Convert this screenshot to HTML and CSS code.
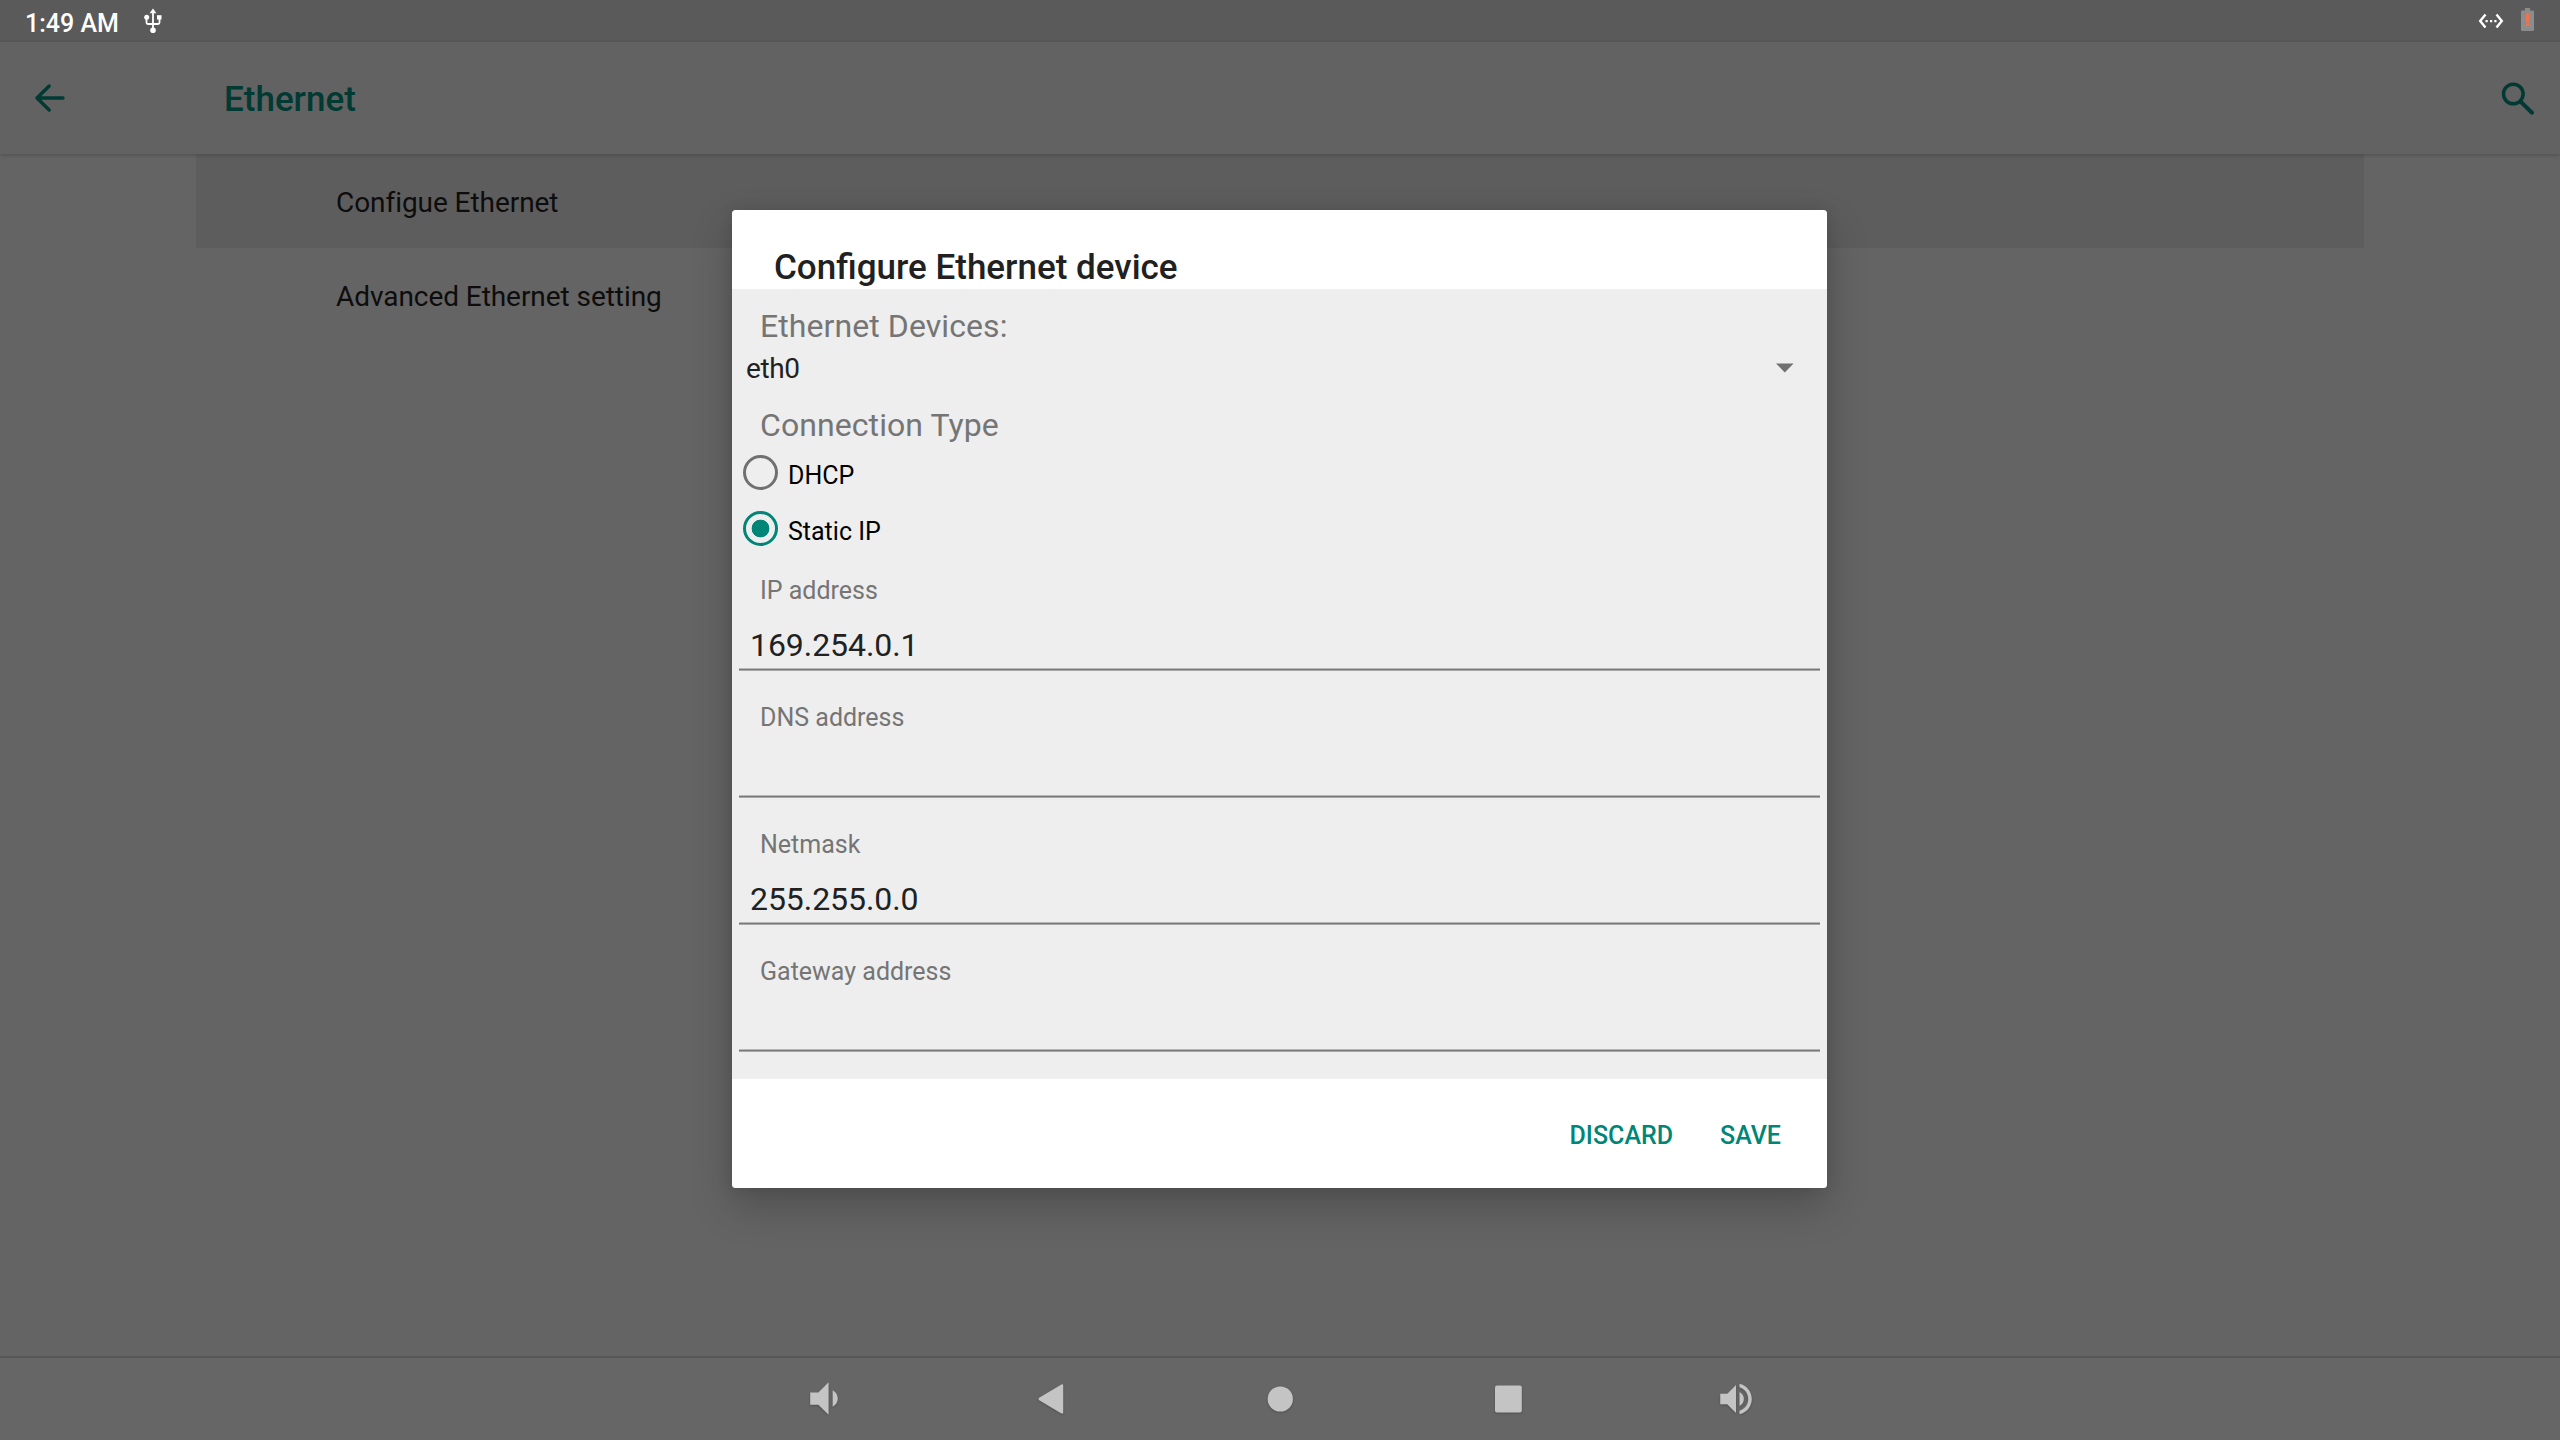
FILE: index.html
```html
<!DOCTYPE html>
<html lang="en">
<head>
<meta charset="utf-8">
<title>Ethernet</title>
<link rel="stylesheet" href="styles.css">
</head>
<body>
<div class="screen">
  <header class="status">
    <span class="clock">1:49 AM</span>
    <svg class="usb" width="18" height="26" viewBox="0 0 18 26"><path d="M9 3v20M2.500 9v5.500q0 1.500 1.500 1.500h10q1.500 0 1.500-1.500V9" fill="none" stroke="#fff" stroke-width="1.800"/><path d="M9 .5l3.400 4.700H5.600z" fill="#fff"/><circle cx="9" cy="22.300" r="2.800" fill="#fff"/><circle cx="2.700" cy="9.300" r="2.500" fill="#fff"/><path d="M13 7.200h4.500v4.300H13z" fill="#fff"/></svg>
    <span class="spacer"></span>
    <svg class="lan" width="26" height="16" viewBox="0 0 26 16"><path d="M7.500 1.500L2.200 8l5.300 6.500M18.500 1.500L23.800 8l-5.300 6.500" fill="none" stroke="#fff" stroke-width="2.400"/><path d="M7.500 7h2.200v2.200H7.500zM12 7h2.200v2.200H12zM16.300 7h2.200v2.200h-2.200z" fill="#fff"/></svg>
    <svg class="battery" width="13" height="23" viewBox="0 0 13 23"><path d="M4 0h5v2.500h2.700q1.300 0 1.300 1.300v17.900q0 1.300-1.300 1.300H1.300Q0 23 0 21.700V3.800q0-1.300 1.300-1.300H4z" fill="#8c8c8c"/><path d="M5 5.500h3.200v9H5zM5 15.500h3.200v2.600H5z" fill="#f4724a"/></svg>
  </header>
  <div class="toolbar">
    <svg class="back" width="32" height="30" viewBox="0 0 32 30"><path d="M29 15H3M15.200 3L3 15l12.200 12" fill="none" stroke="#003a33" stroke-width="3.400" stroke-linecap="round" stroke-linejoin="round"/></svg>
    <h1>Ethernet</h1>
    <svg class="search" width="34" height="34" viewBox="0 0 34 34"><circle cx="12.300" cy="13" r="9.800" fill="none" stroke="#003a33" stroke-width="3.500"/><path d="M20.500 21.500L31 31.700" stroke="#003a33" stroke-width="4" stroke-linecap="round"/></svg>
  </div>
  <main class="list">
    <div class="row selected">Configue Ethernet</div>
    <div class="row">Advanced Ethernet setting</div>
  </main>
  <nav class="nav">
    <span class="key"><svg width="49" height="49" viewBox="0 0 24 24"><path d="M18.500 12c0-1.770-1.020-3.290-2.500-4.030v8.050c1.480-.73 2.500-2.250 2.500-4.020zM5 9v6h4l5 5V4L9 9H5z"/></svg></span>
    <span class="key"><svg width="32" height="34" viewBox="0 0 32 34"><path d="M3.200 15.800Q2 17 3.200 18.200L25 31.300q2.200 1 2.200-1V3.700q0-2-2.200-1z"/></svg></span>
    <span class="key"><svg width="30" height="30" viewBox="0 0 30 30"><ellipse cx="15.300" cy="15" rx="12.600" ry="12.600"/></svg></span>
    <span class="key"><svg width="30" height="30" viewBox="0 0 30 30"><rect x="2" y="1.600" width="26.800" height="26.800" rx="2"/></svg></span>
    <span class="key"><svg width="42" height="42" viewBox="0 0 24 24"><path d="M3 9v6h4l5 5V4L7 9H3zm13.500 3c0-1.770-1.020-3.290-2.500-4.030v8.050c1.480-.73 2.500-2.250 2.500-4.020zM14 3.230v2.060c2.890.86 5 3.540 5 6.710s-2.110 5.850-5 6.710v2.060c4.010-.91 7-4.490 7-8.770s-2.990-7.860-7-8.770z"/></svg></span>
  </nav>
  <section class="dialog">
    <h2>Configure Ethernet device</h2>
    <div class="form">
      <div class="heading">Ethernet Devices:</div>
      <div class="spinner"><span>eth0</span><svg width="18" height="10" viewBox="0 0 18 10"><path d="M0 .5h17.600L8.800 9.500z" fill="#707070"/></svg></div>
      <div class="heading">Connection Type</div>
      <div class="option"><span class="radio"></span><span class="option-text">DHCP</span></div>
      <div class="option"><span class="radio checked"></span><span class="option-text">Static IP</span></div>
      <label class="field"><span>IP address</span><input type="text" value="169.254.0.1"></label>
      <label class="field"><span>DNS address</span><input type="text"></label>
      <label class="field"><span>Netmask</span><input type="text" value="255.255.0.0"></label>
      <label class="field"><span>Gateway address</span><input type="text"></label>
    </div>
    <div class="actions"><span>DISCARD</span><span>SAVE</span></div>
  </section>
</div>
</body>
</html>
```
FILE: styles.css
```css
* { box-sizing: border-box; }
body { margin: 0; font-family: Roboto, sans-serif; }
svg { display: block; flex: none; }
.screen {
  position: relative;
  display: flex;
  flex-direction: column;
  width: 2560px;
  height: 1440px;
  overflow: hidden;
  background: #646464;
}
.status {
  display: flex;
  align-items: flex-start;
  height: 42px;
  padding: 8px 26px 0 25px;
  background: #5a5a5a;
}
.clock {
  width: 119px;
  color: #fff;
  font-size: 25px;
  font-weight: 500;
  line-height: 31px;
  white-space: nowrap;
}
.spacer { flex: 1; }
.lan { margin: 5px 17px 0 0; }
.toolbar {
  position: relative;
  display: flex;
  align-items: center;
  height: 112px;
  padding: 0 25px 0 34px;
  background: #626262;
  box-shadow: 0 1px 4px rgba(0, 0, 0, .22);
}
.toolbar h1 {
  flex: 1;
  margin: 0 0 0 158px;
  padding-top: 4px;
  color: #003a33;
  font-size: 35px;
  font-weight: 500;
  line-height: 42px;
}
.list { flex: 1; padding: 0 196px; }
.row {
  height: 94px;
  padding-left: 140px;
  color: #0d0d0d;
  font-size: 28px;
  letter-spacing: -.06px;
  line-height: 98px;
}
.selected { background: #5d5d5d; }
.nav {
  display: flex;
  justify-content: center;
  height: 84px;
  padding-bottom: 1px;
  border-top: 2px solid #575757;
  background: #666;
}
.key {
  display: flex;
  align-items: center;
  justify-content: center;
  width: 228px;
}
.key svg { fill: #c4c4c4; filter: drop-shadow(0 1px 1px rgba(0, 0, 0, .22)); }
.dialog {
  position: absolute;
  left: 732px;
  top: 210px;
  display: flex;
  flex-direction: column;
  width: 1095px;
  height: 978px;
  overflow: hidden;
  border-radius: 3.5px;
  background: #fff;
  box-shadow: 0 18px 42px rgba(0, 0, 0, .22), 0 0 14px rgba(0, 0, 0, .1);
}
.dialog h2 {
  height: 79px;
  margin: 0;
  padding: 37px 42px 0;
  color: #212121;
  font-size: 35px;
  font-weight: 500;
  line-height: 42px;
}
.form { height: 790px; padding-top: 19px; background: #eee; }
.heading {
  height: 37px;
  padding-left: 28px;
  color: #757575;
  font-size: 32px;
  letter-spacing: .08px;
  line-height: 37px;
}
.spinner {
  display: flex;
  justify-content: space-between;
  height: 62px;
  padding: 7px 33px 0 14px;
  color: #212121;
  font-size: 28px;
  letter-spacing: -.4px;
  line-height: 33px;
}
.spinner svg { margin-top: 11px; }
.option {
  display: flex;
  align-items: center;
  height: 56px;
  padding-left: 10.5px;
  color: #000;
  font-size: 25px;
}
.spinner + .heading { margin-bottom: 1px; }
.radio {
  width: 35px;
  height: 35px;
  margin-bottom: 1px;
  border: 3.5px solid #707070;
  border-radius: 50%;
}
.radio.checked {
  border-color: #008577;
  background: radial-gradient(circle, #008577 8.5px, transparent 9.2px);
}
.option-text { margin-left: 10.5px; padding-top: 5px; line-height: 29px; }
.field { display: block; height: 127px; padding-top: 19px; }
.field span {
  display: block;
  padding-left: 28px;
  color: #757575;
  font-size: 25px;
  line-height: 29px;
}
.field input {
  display: block;
  width: 1081px;
  height: 66px;
  margin: 0 7px;
  padding: 21px 11px 8px;
  border: 0;
  background: linear-gradient(#b8b8b8 1px, #787878 1px 2px, #a8a8a8 2px) 0 100% / 100% 3px no-repeat;
  color: #212121;
  font: 32px Roboto, sans-serif;
  letter-spacing: -.06px;
  line-height: 37px;
}
.actions {
  display: flex;
  justify-content: flex-end;
  gap: 47px;
  padding: 42px 46px 0;
  color: #008577;
  font-size: 25px;
  font-weight: 500;
  line-height: 29px;
}
```
